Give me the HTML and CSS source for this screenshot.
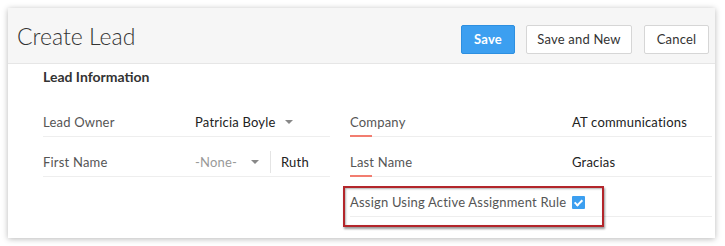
FILE: index.html
```html
<!DOCTYPE html>
<html lang="en">
<head>
  <meta charset="UTF-8">
  <title>Create Lead</title>
  <link rel="stylesheet" href="styles.css">
</head>
<body>
  <div class="card">
    <div class="header">
      <h1>Create Lead</h1>
      <div class="actions">
        <button class="btn btn-primary">Save</button>
        <button class="btn btn-new">Save and New</button>
        <button class="btn btn-cancel">Cancel</button>
      </div>
    </div>

    <div class="content">
      <h2>Lead Information</h2>

      <div class="form">
        <div class="field">
          <span class="label">Lead Owner</span>
          <span class="value">Patricia Boyle <span class="caret"></span></span>
        </div>
        <div class="field">
          <span class="label required">Company</span>
          <span class="value">AT communications</span>
        </div>

        <div class="field name">
          <span class="label">First Name</span>
          <span class="value">
            <span class="salutation">-None- <span class="caret"></span></span>
            <span class="first">Ruth</span>
          </span>
        </div>
        <div class="field">
          <span class="label required">Last Name</span>
          <span class="value">Gracias</span>
        </div>

        <div class="field empty"></div>
        <div class="field highlight">
          <span class="label wide">Assign Using Active Assignment Rule</span>
          <span class="value"><span class="checkbox"></span></span>
        </div>
      </div>
    </div>
  </div>
</body>
</html>
```

FILE: styles.css
```css
* {
  box-sizing: border-box;
}

body {
  margin: 0;
  background-color: #fff;
  font-family: 'Lato', sans-serif;
  color: #333;
}

.card {
  margin: 8px;
  width: 707px;
  height: 230px;
  background-color: #fff;
  box-shadow: 0 1px 6px rgba(0, 0, 0, 0.28);
}

/* Header bar */
.header {
  display: flex;
  justify-content: space-between;
  align-items: center;
  height: 56px;
  padding: 7px 6px 0 9px;
  background-color: #f6f6f6;
  border-bottom: 1px solid #e6e6e6;
}

h1 {
  margin: 0 0 6px;
  font-size: 23px;
  font-weight: 300;
  color: #333;
}

.actions {
  display: flex;
  gap: 11px;
}

.btn {
  height: 29px;
  padding: 0;
  border: 1px solid #d6d6d6;
  border-radius: 2px;
  background-color: #fff;
  font-family: 'Lato', sans-serif;
  font-size: 13px;
  letter-spacing: 0.2px;
  color: #333;
}

.btn-primary {
  width: 54px;
  background-color: #3c9ff0;
  border-color: #2d8fe0;
  color: #fff;
  font-weight: 700;
}

.btn-new {
  width: 106px;
}

.btn-cancel {
  width: 65px;
  margin-left: 1px;
}

/* Form */
.content {
  padding: 4px 3px 0 35px;
}

h2 {
  margin: 0;
  font-size: 14px;
  font-weight: 700;
  color: #333;
  line-height: 18px;
}

.form {
  display: grid;
  grid-template-columns: 287px 362px;
  column-gap: 20px;
  margin-top: 11px;
}

.field {
  position: relative;
  display: flex;
  align-items: flex-end;
  height: 40px;
  padding-bottom: 6px;
  border-bottom: 1px solid #eeeeee;
  font-size: 13px;
  letter-spacing: 0.2px;
}

.field.name {
  padding-bottom: 3px;
}

.field.name .label {
  margin-bottom: 3px;
}

.field.empty {
  border-bottom: none;
}

.label {
  position: relative;
  width: 152px;
  color: #555;
}

.field:nth-child(even) .label {
  width: 222px;
}

.field.highlight .label.wide {
  white-space: nowrap;
}

.label.required::after {
  content: '';
  position: absolute;
  left: 0;
  bottom: -7px;
  width: 22px;
  height: 2px;
  background-color: #f27d70;
}

.value {
  display: flex;
  align-items: center;
  color: #222;
}

.caret {
  display: inline-block;
  width: 0;
  height: 0;
  margin-left: 9px;
  border-left: 4px solid transparent;
  border-right: 4px solid transparent;
  border-top: 4px solid #888;
}

.salutation {
  display: flex;
  align-items: center;
  width: 75px;
  color: #999;
}

.salutation .caret {
  margin-left: 14px;
}

.first {
  padding: 3px 0 3px 10px;
  border-left: 1px solid #e4e4e4;
}

.checkbox {
  display: inline-block;
  position: relative;
  width: 13px;
  height: 13px;
  margin-bottom: 1px;
  background-color: #3c9ff0;
  border-radius: 1px;
}

.checkbox::after {
  content: '';
  position: absolute;
  left: 4px;
  top: 2px;
  width: 3px;
  height: 6px;
  border-right: 2px solid #fff;
  border-bottom: 2px solid #fff;
  transform: rotate(45deg);
}

/* Annotation box around the assignment rule row */
.highlight::before {
  content: '';
  position: absolute;
  left: -7px;
  top: 9px;
  width: 257px;
  height: 37px;
  border: 2px solid #b3262b;
  box-shadow: 1px 2px 2px rgba(0, 0, 0, 0.4), inset 1px 1px 2px rgba(0, 0, 0, 0.3);
}
```
